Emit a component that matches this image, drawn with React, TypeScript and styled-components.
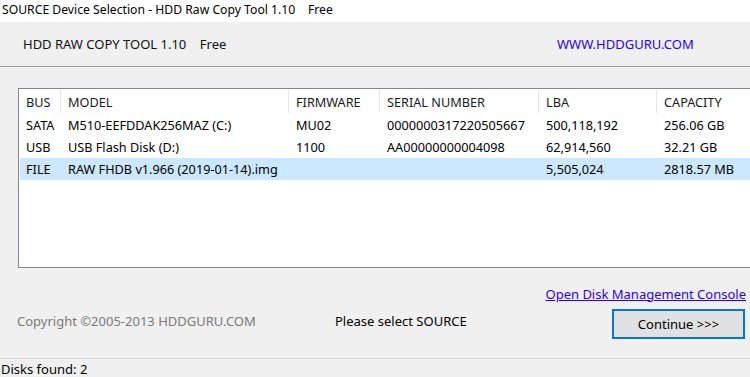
import { createGlobalStyle } from "styled-components";
import styled from "styled-components";

const GlobalStyle = createGlobalStyle`
  html, body {
    margin: 0;
    padding: 0;
    background: #f0f0f0;
    font-family: "Noto Sans", "Open Sans", sans-serif;
  }
`;

type Disk = {
  bus: string;
  model: string;
  firmware: string;
  serial: string;
  lba: string;
  capacity: string;
  selected?: boolean;
};

const disks: Disk[] = [
  {
    bus: "SATA",
    model: "M510-EEFDDAK256MAZ (C:)",
    firmware: "MU02",
    serial: "0000000317220505667",
    lba: "500,118,192",
    capacity: "256.06 GB",
  },
  {
    bus: "USB",
    model: "USB Flash Disk (D:)",
    firmware: "1100",
    serial: "AA00000000004098",
    lba: "62,914,560",
    capacity: "32.21 GB",
  },
  {
    bus: "FILE",
    model: "RAW FHDB v1.966 (2019-01-14).img",
    firmware: "",
    serial: "",
    lba: "5,505,024",
    capacity: "2818.57 MB",
    selected: true,
  },
];

const columns = ["BUS", "MODEL", "FIRMWARE", "SERIAL NUMBER", "LBA", "CAPACITY"];
const gridTemplate = "42px 228px 91px 159px 118px 1fr";

export default function App() {
  return (
    <Window>
      <GlobalStyle />
      <TitleBar>SOURCE Device Selection - HDD Raw Copy Tool 1.10&nbsp;&nbsp;&nbsp;&nbsp;Free</TitleBar>
      <Banner>
        <BannerTitle>HDD RAW COPY TOOL 1.10&nbsp;&nbsp;&nbsp;&nbsp;Free</BannerTitle>
        <SiteLink>WWW.HDDGURU.COM</SiteLink>
      </Banner>
      <Body>
        <DiskList>
          <HeaderRow>
            {columns.map((c, i) => (
              <HeaderCell key={c} $first={i === 0}>
                {c}
              </HeaderCell>
            ))}
          </HeaderRow>
          {disks.map((d) => (
            <DiskRow key={d.bus} $selected={d.selected}>
              <Cell>{d.bus}</Cell>
              <Cell>{d.model}</Cell>
              <Cell>{d.firmware}</Cell>
              <Cell>{d.serial}</Cell>
              <Cell>{d.lba}</Cell>
              <Cell>{d.capacity}</Cell>
            </DiskRow>
          ))}
        </DiskList>
        <Footer>
          <ConsoleLink>Open Disk Management Console</ConsoleLink>
          <Copyright>Copyright ©2005-2013 HDDGURU.COM</Copyright>
          <Prompt>Please select SOURCE</Prompt>
          <ContinueButton>Continue &gt;&gt;&gt;</ContinueButton>
        </Footer>
      </Body>
      <StatusBar>Disks found: 2</StatusBar>
    </Window>
  );
}

const Window = styled.div`
  width: 750px;
  height: 377px;
  overflow: hidden;
  display: flex;
  flex-direction: column;
  background: #f0f0f0;
  color: #000;
`;

const TitleBar = styled.div`
  height: 22px;
  background: #fff;
  font-size: 12.2px;
  line-height: 19px;
  padding-left: 2px;
  white-space: pre;
`;

const Banner = styled.div`
  height: 44px;
  display: flex;
  align-items: center;
  border-bottom: 1px solid #a0a0a0;
  padding-left: 23px;
`;

const BannerTitle = styled.div`
  font-size: 13px;
  width: 534px;
  color: #111;
`;

const SiteLink = styled.div`
  font-size: 13px;
  color: #2a00ff;
`;

const Body = styled.div`
  flex: 1;
  display: flex;
  flex-direction: column;
  padding: 21px 0 0 18px;
  border-bottom: 1px solid #d9d9d9;
`;

const DiskList = styled.div`
  height: 178px;
  width: 740px;
  background: #fff;
  border: 1px solid #828790;
  border-right: none;
  font-size: 12.7px;
`;

const HeaderRow = styled.div`
  display: grid;
  grid-template-columns: ${gridTemplate};
  height: 25px;
  align-items: center;
`;

const HeaderCell = styled.div<{ $first?: boolean }>`
  height: 23px;
  line-height: 25px;
  padding-left: 7px;
  white-space: nowrap;
  border-left: ${({ $first }) => ($first ? "none" : "1px solid #e5e5e5")};
  margin-left: ${({ $first }) => ($first ? "0" : "-1px")};
  color: #1a1a1a;
`;

const DiskRow = styled.div<{ $selected?: boolean }>`
  display: grid;
  grid-template-columns: ${gridTemplate};
  height: 22px;
  line-height: 23px;
  margin-left: 1px;
  background: ${({ $selected }) => ($selected ? "#cce8ff" : "transparent")};
`;

const Cell = styled.div`
  padding-left: 6px;
  white-space: nowrap;
`;

const Footer = styled.div`
  flex: 1;
  display: grid;
  grid-template-columns: 317px 277px 133px;
  grid-template-rows: 31px 30px;
  padding-top: 10px;
  align-items: center;
`;

const ConsoleLink = styled.div`
  grid-column: 2 / 4;
  justify-self: end;
  margin-right: -1px;
  font-size: 13px;
  color: #2a00ff;
  text-decoration: underline;
`;

const Copyright = styled.div`
  font-size: 13px;
  color: #7a7a7a;
  margin-left: -1px;
  margin-top: -6px;
`;

const Prompt = styled.div`
  font-size: 13px;
  margin-top: -6px;
`;

const ContinueButton = styled.button`
  height: 30px;
  width: 133px;
  box-sizing: border-box;
  border: 2px solid #0078d7;
  background: #e1e1e1;
  font-family: inherit;
  font-size: 13px;
  color: #000;
  padding: 0;
`;

const StatusBar = styled.div`
  height: 18px;
  font-size: 13px;
  line-height: 20px;
  padding-left: 1px;
`;
